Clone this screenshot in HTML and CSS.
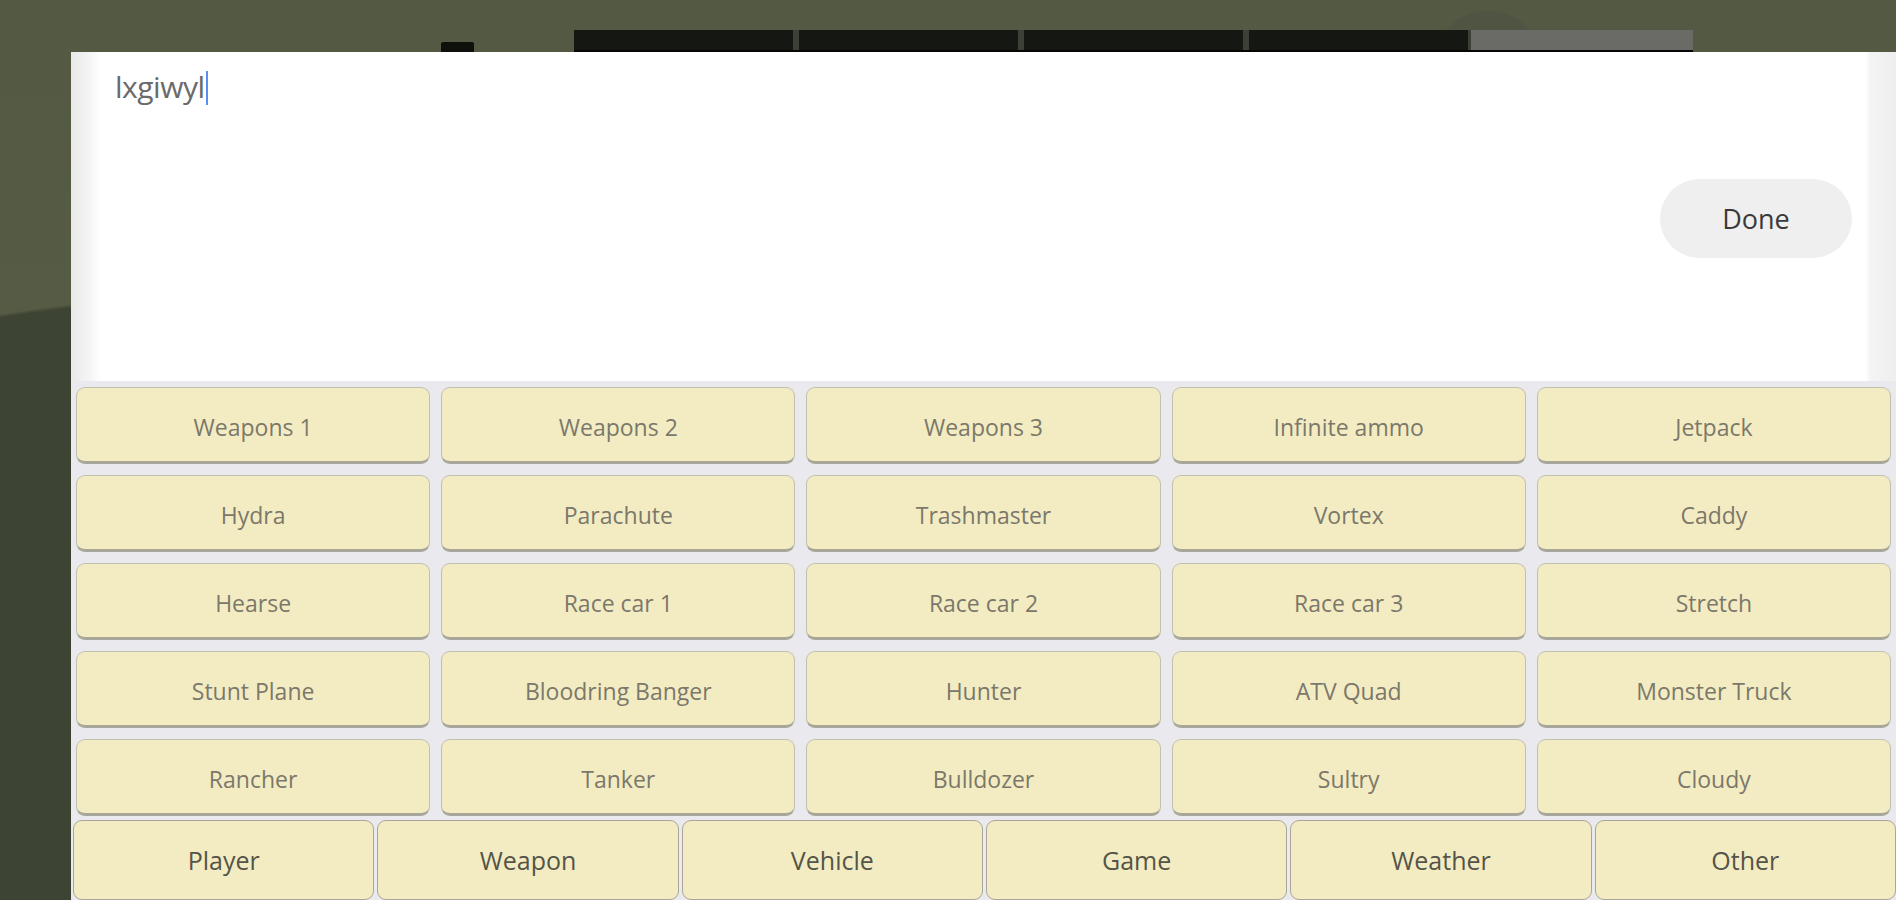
FILE: index.html
```html
<!DOCTYPE html>
<html lang="en">
<head>
<meta charset="utf-8">
<title>Cheats</title>
<link rel="stylesheet" href="styles.css">
</head>
<body>
<div class="hud">
  <div class="hud-sq"></div>
  <div class="hud-bars">
    <div class="bar"></div>
    <div class="bar"></div>
    <div class="bar"></div>
    <div class="bar"></div>
    <div class="bar bar-gray"></div>
  </div>
</div>
<div class="panel">
  <div class="input-area">
    <div class="typed">lxgiwyl<span class="caret"></span></div>
    <div class="done">Done</div>
  </div>
  <div class="keys">
    <div class="grid">
      <div class="key">Weapons 1</div>
      <div class="key">Weapons 2</div>
      <div class="key">Weapons 3</div>
      <div class="key">Infinite ammo</div>
      <div class="key">Jetpack</div>
      <div class="key">Hydra</div>
      <div class="key">Parachute</div>
      <div class="key">Trashmaster</div>
      <div class="key">Vortex</div>
      <div class="key">Caddy</div>
      <div class="key">Hearse</div>
      <div class="key">Race car 1</div>
      <div class="key">Race car 2</div>
      <div class="key">Race car 3</div>
      <div class="key">Stretch</div>
      <div class="key">Stunt Plane</div>
      <div class="key">Bloodring Banger</div>
      <div class="key">Hunter</div>
      <div class="key">ATV Quad</div>
      <div class="key">Monster Truck</div>
      <div class="key">Rancher</div>
      <div class="key">Tanker</div>
      <div class="key">Bulldozer</div>
      <div class="key">Sultry</div>
      <div class="key">Cloudy</div>
    </div>
    <div class="tabs">
      <div class="tab">Player</div>
      <div class="tab">Weapon</div>
      <div class="tab">Vehicle</div>
      <div class="tab">Game</div>
      <div class="tab">Weather</div>
      <div class="tab">Other</div>
    </div>
  </div>
</div>
</body>
</html>
```

FILE: styles.css
```css
html, body {
  margin: 0;
  padding: 0;
}

body {
  width: 1896px;
  height: 900px;
  overflow: hidden;
  font-family: "Open Sans", "DejaVu Sans", sans-serif;
  background:
    radial-gradient(circle 58px at 1488px 68px, #4f5542 97%, transparent 100%),
    radial-gradient(circle 1875px at 300px 2165px, #3e4433 99.8%, transparent 100%),
    linear-gradient(#535942, #596047);
}

/* background game HUD peeking above the panel */
.hud {
  height: 52px;
  display: flex;
  align-items: flex-end;
}

.hud-sq {
  margin-left: 441px;
  width: 33px;
  height: 10px;
  background: #0e100c;
  border-radius: 2px 2px 0 0;
}

.hud-bars {
  margin-left: 100px;
  display: flex;
  gap: 6px;
  height: 22px;
  background: #3d4037;
  border-bottom: 2px solid #050605;
  box-sizing: border-box;
}

.bar {
  width: 219px;
  background: #151713;
}

.bar-gray {
  margin-left: -3px;
  width: 222px;
  background: #6a6b66;
}

/* dialog panel */
.panel {
  margin-left: 71px;
  height: 848px;
  background: #fff;
  display: flex;
  flex-direction: column;
}

.input-area {
  height: 334px;
  display: flex;
  justify-content: space-between;
  align-items: flex-start;
  padding: 0 44px 0 44px;
  background: linear-gradient(to right,
    #e9e9e9 0, #f6f6f6 20px, #ffffff 30px,
    #ffffff calc(100% - 30px), #f4f4f4 calc(100% - 26px), #eeeeee 100%);
}

.typed {
  margin-top: 15px;
  font-size: 30px;
  line-height: 40px;
  color: #6a6a6a;
  letter-spacing: -0.5px;
}

.caret {
  display: inline-block;
  width: 2px;
  height: 34px;
  margin-left: 1px;
  vertical-align: -7px;
  background: #5a8ef2;
}

.done {
  margin-top: 127px;
  width: 192px;
  height: 79px;
  border-radius: 40px;
  background: #efefef;
  color: #3a3a3a;
  font-size: 27px;
  display: flex;
  align-items: center;
  justify-content: center;
}

/* cheat keyboard */
.keys {
  flex: 1;
  background: #e9e9ee;
  padding: 6px 5px 0 5px;
  display: flex;
  flex-direction: column;
}

.grid {
  display: grid;
  grid-template-columns: repeat(5, 1fr);
  grid-auto-rows: 77px;
  gap: 11px 11px;
}

.key {
  box-sizing: border-box;
  padding-top: 4px;
  background: #f3ecc2;
  border: 1px solid #c3c0b0;
  border-bottom: 3px solid #a8a599;
  border-radius: 9px;
  display: flex;
  align-items: center;
  justify-content: center;
  font-size: 23px;
  color: #7b786b;
}

.tabs {
  display: flex;
  gap: 3px;
  margin: 4px -5px 0 -3px;
}

.tab {
  flex: 1;
  height: 80px;
  box-sizing: border-box;
  background: #f3ecc2;
  border: 1px solid #a9a698;
  border-radius: 9px;
  display: flex;
  align-items: center;
  justify-content: center;
  font-size: 25px;
  color: #555449;
}
```
